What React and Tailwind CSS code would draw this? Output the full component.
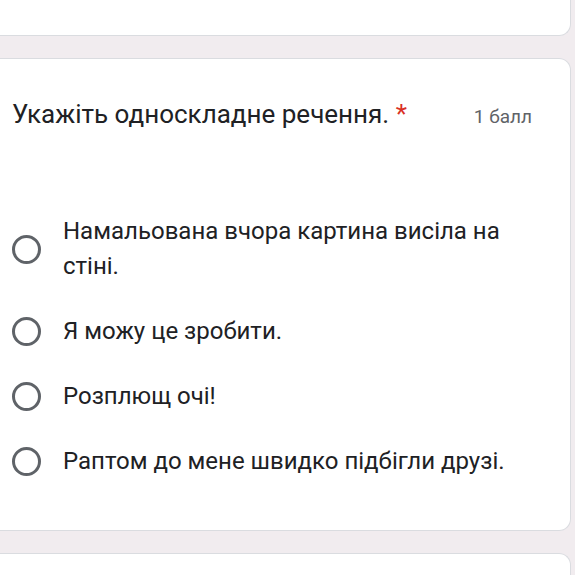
const options = [
  "Намальована вчора картина висіла на стіні.",
  "Я можу це зробити.",
  "Розплющ очі!",
  "Раптом до мене швидко підбігли друзі.",
];

function Radio() {
  return (
    <span className="mt-[1px] h-[29px] w-[29px] shrink-0 rounded-full border-[3px] border-[#5f6368]" />
  );
}

export default function App() {
  return (
    <div
      className="flex h-[575px] w-[575px] flex-col gap-[22px] overflow-hidden bg-[#f1ecef] pr-[4px] text-[#202124]"
      style={{ fontFamily: "Roboto, 'Noto Sans', sans-serif" }}
    >
      <div className="h-[36px] shrink-0 rounded-br-[12px] border-r border-b border-[#dadce0] bg-white" />

      <div className="h-[473px] shrink-0 rounded-r-[12px] border-y border-r border-[#dadce0] bg-white pt-[38px] pl-[12px]">
        <div className="flex items-baseline justify-between pr-[38px]">
          <h2 className="text-[26px] leading-[34px]">
            Укажіть односкладне речення. <span className="text-[#d93025]">*</span>
          </h2>
          <span className="text-[19px] text-[#5f6368]">1 балл</span>
        </div>

        <div className="mt-[82px] flex flex-col gap-[30px]">
          {options.map((o) => (
            <div key={o} className="flex items-center gap-[22px]">
              <Radio />
              <span className="w-[450px] text-[24px] leading-[35px]">{o}</span>
            </div>
          ))}
        </div>
      </div>

      <div className="h-[40px] shrink-0 rounded-tr-[12px] border-t border-r border-[#dadce0] bg-white" />
    </div>
  );
}
